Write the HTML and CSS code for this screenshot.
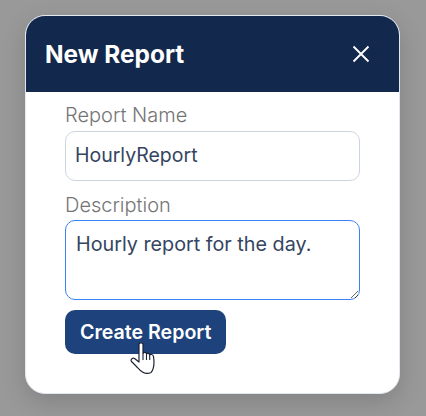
FILE: index.html
```html
<!DOCTYPE html>
<html lang="en">
<head>
    <meta charset="UTF-8">
    <meta name="viewport" content="width=device-width, initial-scale=1.0">
    <title>New Report</title>
    <link rel="stylesheet" href="styles.css">
</head>
<body>
    <div class="modal">
        <div class="modal-header">
            <h2>New Report</h2>
            <button class="btn-close" aria-label="Close">
                <svg width="18" height="18" viewBox="0 0 18 18"><path d="M1.500 1.500L16.500 16.500M16.500 1.500L1.500 16.500" stroke="#fff" stroke-width="1.900" fill="none"/></svg>
            </button>
        </div>
        <form class="modal-body">
            <label class="field-label" for="reportName">Report Name</label>
            <input class="field" id="reportName" type="text" value="HourlyReport">
            <label class="field-label field-label-tight" for="reportDesc">Description</label>
            <textarea class="field field-area" id="reportDesc">Hourly report for the day.</textarea>
            <div class="actions">
                <button class="btn-create" type="button">Create Report</button>
                <svg class="hand-cursor" width="26" height="32" viewBox="0 0 26 32">
                    <path d="M9 2.500C9 .3 13 .3 13 2.500V11.500C13.500 10 16.300 10 16.500 12C17 11 19.400 11.200 19.700 13C20.400 12 23.300 12.200 23.500 14.500C24 18 24.200 22 23.500 25C23 27.500 22.500 29.500 21 30.500C18.500 31.500 14.500 31.500 12.500 30C10 28.500 8 26 6 24L1.500 19.500C.2 17.500 2.500 15.500 4.500 16.500L9 20Z" fill="#fff" stroke="#1a2233" stroke-width="1.200" stroke-linejoin="round"/>
                    <path d="M13 11.500V18M16.500 12V18M19.700 13V18" stroke="#1a2233" stroke-width="1.100" fill="none"/>
                </svg>
            </div>
        </form>
    </div>
</body>
</html>
```

FILE: styles.css
```css
* {
    box-sizing: border-box;
}

html, body {
    height: 100%;
}

body {
    margin: 0;
    background: #999999;
    font-family: Inter, "Liberation Sans", sans-serif;
    overflow: hidden;
}

.modal {
    width: 375px;
    height: 379px;
    margin: 15px 0 0 25px;
    background: #fff;
    border: 1px solid #e2e8f0;
    border-radius: 20px;
    overflow: hidden;
    box-shadow: 0 8px 24px rgba(0, 0, 0, 0.15);
}

.modal-header {
    display: flex;
    align-items: center;
    justify-content: space-between;
    height: 76px;
    padding: 0 29px 0 19px;
    background: #12284c;
    color: #fff;
}

.modal-header h2 {
    margin: 0;
    font-size: 24.4px;
    font-weight: 700;
}

.btn-close {
    display: flex;
    padding: 0;
    border: none;
    background: none;
    cursor: pointer;
}

.modal-body {
    display: flex;
    flex-direction: column;
    padding: 10px 39px 0;
}

.field-label {
    margin-bottom: 2px;
    font-size: 20px;
    font-weight: 300;
    line-height: 27px;
    color: #757575;
}

.field-label-tight {
    margin-top: 1px;
    margin-bottom: 1px;
}

.field {
    width: 100%;
    height: 50px;
    margin-bottom: 10px;
    padding: 0 0 2px 9px;
    border: 1px solid #cbd5e0;
    border-radius: 10px;
    background: #fff;
    font-family: inherit;
    font-size: 19.5px;
    color: #34455f;
    outline: none;
}

.field-area {
    display: block;
    height: 80px;
    padding: 8px 10px;
    border-color: #3b82f6;
    font-size: 19.75px;
    line-height: 30px;
}

.actions {
    position: relative;
    display: flex;
}

.btn-create {
    height: 44px;
    padding: 0 15px;
    border: none;
    border-radius: 10px;
    background: #1e437c;
    color: #fff;
    font-family: inherit;
    font-size: 19.6px;
    font-weight: 600;
    cursor: pointer;
}

.hand-cursor {
    position: absolute;
    left: 65px;
    top: 32px;
}
```
